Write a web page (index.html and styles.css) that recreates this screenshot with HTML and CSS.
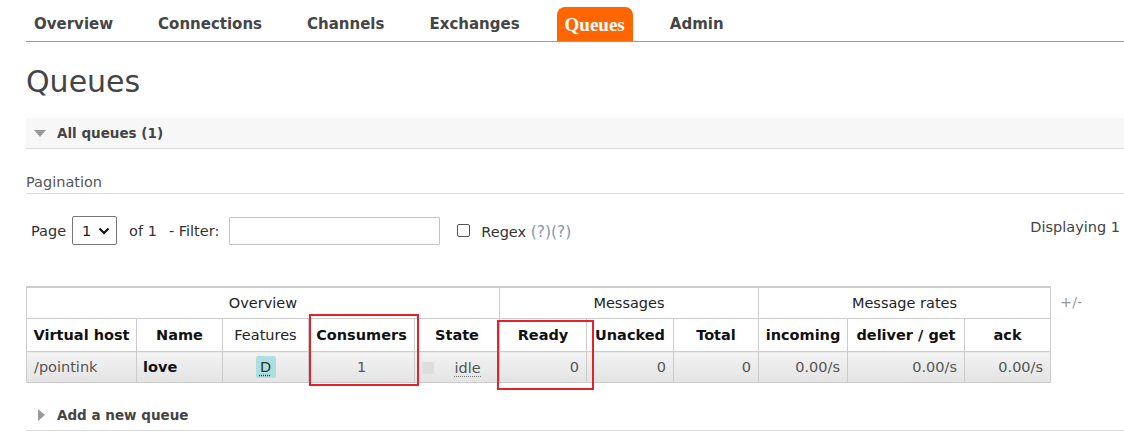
FILE: index.html
```html
<!DOCTYPE html>
<html lang="en">
<head>
<meta charset="utf-8">
<title>Queues</title>
<link rel="stylesheet" href="styles.css">
</head>
<body>
<div class="page">
  <nav class="menu">
    <ul>
      <li><a>Overview</a></li>
      <li><a>Connections</a></li>
      <li><a>Channels</a></li>
      <li><a>Exchanges</a></li>
      <li class="selected"><a>Queues</a></li>
      <li><a>Admin</a></li>
    </ul>
  </nav>

  <h1 class="title">Queues</h1>

  <section class="section">
    <h2 class="sec-head"><span class="tri-down"></span>All queues (1)</h2>
    <div class="sec-body">
      <h3 class="pag-title">Pagination</h3>
      <div class="filter-row">
        <div class="filter-left">
          <span class="lbl-page">Page</span>
          <div class="sel-wrap">
            <select class="page-select"><option>1</option></select>
            <svg class="chev" width="12" height="8" viewBox="0 0 12 8"><path d="M1.5 1.5 L6 6 L10.5 1.5" fill="none" stroke="#111" stroke-width="2"/></svg>
          </div>
          <span class="lbl-of">of 1</span>
          <span class="lbl-filter">- Filter:</span>
          <input class="filter-input" type="text">
          <span class="checkbox"></span>
          <span class="lbl-regex">Regex <span class="help">(?)(?)</span></span>
        </div>
        <div class="displaying">Displaying 1</div>
      </div>

      <div class="table-wrap">
        <table class="list">
          <colgroup>
            <col class="c-vhost"><col class="c-name"><col class="c-feat"><col class="c-cons"><col class="c-state">
            <col class="c-ready"><col class="c-unack"><col class="c-total">
            <col class="c-in"><col class="c-deliver"><col class="c-ack">
          </colgroup>
          <thead>
            <tr class="group-row">
              <th colspan="5">Overview</th>
              <th colspan="3">Messages</th>
              <th colspan="3">Message rates</th>
            </tr>
            <tr class="head-row">
              <th>Virtual host</th>
              <th>Name</th>
              <th class="plain">Features</th>
              <th>Consumers</th>
              <th>State</th>
              <th>Ready</th>
              <th>Unacked</th>
              <th>Total</th>
              <th>incoming</th>
              <th>deliver / get</th>
              <th>ack</th>
            </tr>
          </thead>
          <tbody>
            <tr class="data-row">
              <td class="left">/pointink</td>
              <td class="left name">love</td>
              <td class="center"><span class="badge">D</span></td>
              <td class="center">1</td>
              <td class="center state"><span class="state-box"></span><span class="idle">idle</span></td>
              <td class="right">0</td>
              <td class="right">0</td>
              <td class="right">0</td>
              <td class="right">0.00/s</td>
              <td class="right">0.00/s</td>
              <td class="right">0.00/s</td>
            </tr>
          </tbody>
        </table>
        <span class="plusminus">+/-</span>
        <div class="mark mark-consumers"></div>
        <div class="mark mark-ready"></div>
      </div>
    </div>
  </section>

  <section class="section collapsed">
    <h2 class="sec-head"><span class="tri-right"></span>Add a new queue</h2>
  </section>
</div>
</body>
</html>
```
FILE: styles.css
```css
html, body {
  margin: 0;
  padding: 0;
  background: #fff;
}

body {
  font-family: "DejaVu Sans", Verdana, sans-serif;
  font-size: 14.5px;
  color: #444;
}

.page {
  padding-left: 26px;
}

/* ---------- menu ---------- */
.menu ul {
  list-style: none;
  margin: 7px 0 0 0;
  padding: 0;
  display: flex;
  gap: 29px;
  border-bottom: 1px solid #ec8a2e;
}

.menu li a {
  display: block;
  height: 34px;
  line-height: 35px;
  padding: 0 8px;
  font-weight: bold;
  font-size: 15px;
  color: #454545;
}

.menu li.selected a {
  background: #ff6600;
  color: #fff;
  border-radius: 8px 8px 0 0;
  font-family: "Liberation Serif", "Times New Roman", serif;
  font-size: 19px;
  padding: 0 8px;
}

/* ---------- title ---------- */
.title {
  margin: 22px 0 0 0;
  font-size: 30px;
  line-height: 36px;
  font-weight: normal;
  color: #444;
}

/* ---------- sections ---------- */
.section .sec-head {
  margin: 18px 0 0 0;
  height: 30px;
  line-height: 31px;
  padding-left: 8px;
  background: #f7f7f7;
  border-bottom: 1px solid #ddd;
  font-size: 13.5px;
  font-weight: bold;
  color: #444;
  display: flex;
  align-items: center;
}

.section.collapsed .sec-head {
  margin-top: 17px;
  background: #fff;
  padding-left: 12px;
}

.tri-down {
  width: 0;
  height: 0;
  border-left: 6px solid transparent;
  border-right: 6px solid transparent;
  border-top: 7px solid #9a9a9a;
  margin-right: 11px;
}

.tri-right {
  width: 0;
  height: 0;
  border-top: 6px solid transparent;
  border-bottom: 6px solid transparent;
  border-left: 7px solid #9a9a9a;
  margin-right: 12px;
}

.pag-title {
  margin: 24px 0 0 0;
  font-size: 14.5px;
  line-height: 18px;
  font-weight: normal;
  color: #555;
  padding-bottom: 2px;
  border-bottom: 1px solid #ddd;
}

/* ---------- filter row ---------- */
.filter-row {
  margin-top: 22px;
  display: flex;
  justify-content: space-between;
  align-items: flex-start;
  padding-left: 5px;
  padding-right: 4px;
}

.filter-left {
  display: flex;
  align-items: center;
  height: 29px;
  color: #333;
}

.lbl-page { margin-right: 6px; }

.sel-wrap {
  position: relative;
  width: 45px;
  height: 29px;
}

.page-select {
  appearance: none;
  -webkit-appearance: none;
  width: 45px;
  height: 29px;
  box-sizing: border-box;
  border: 1px solid #767676;
  border-radius: 2px;
  background: #fff;
  padding: 0 0 0 9px;
  font-family: "DejaVu Sans", Verdana, sans-serif;
  font-size: 14.5px;
  color: #222;
}

.chev {
  position: absolute;
  left: 26px;
  top: 11px;
  pointer-events: none;
}

.lbl-of { margin-left: 12px; }
.lbl-filter { margin-left: 12px; }

.filter-input {
  margin: 0 0 0 10px;
  width: 211px;
  height: 28px;
  box-sizing: border-box;
  border: 1px solid #c4c4c4;
  border-radius: 1px;
  padding: 0;
}

.checkbox {
  margin-left: 17px;
  width: 13px;
  height: 13px;
  box-sizing: border-box;
  border: 1px solid #555;
  border-radius: 2px;
  background: #fff;
}

.lbl-regex {
  margin-left: 11px;
  margin-top: 3px;
}

.help {
  color: #8497ab;
  font-size: 15.5px;
}

.displaying {
  margin-top: 2px;
  line-height: 18px;
  color: #444;
}

/* ---------- table ---------- */
.table-wrap {
  position: relative;
  margin-top: 41px;
  display: flex;
  align-items: flex-start;
  gap: 9px;
}

.list {
  border-collapse: collapse;
  table-layout: fixed;
  width: 1024px;
  border-top: 2px solid #ccc;
  font-size: 14.5px;
}

.c-vhost { width: 110px; }
.c-name { width: 86px; }
.c-feat { width: 86px; }
.c-cons { width: 106px; }
.c-state { width: 85px; }
.c-ready { width: 87px; }
.c-unack { width: 87px; }
.c-total { width: 85px; }
.c-in { width: 89px; }
.c-deliver { width: 117px; }
.c-ack { width: 86px; }

.list th, .list td {
  border: 1px solid #ccc;
  padding: 0 7px;
  white-space: nowrap;
  overflow: hidden;
}

.group-row th {
  height: 30px;
  font-weight: normal;
  color: #222;
  text-align: center;
  background: #fff;
}

.head-row th {
  height: 32px;
  font-weight: bold;
  color: #111;
  text-align: center;
  background: #fff;
  padding: 0 2px;
}

.head-row th.plain {
  font-weight: normal;
  color: #222;
}

.data-row td {
  height: 30px;
  color: #555;
  background: linear-gradient(#f3f3f3, #e4e4e4);
}

.data-row td.left { text-align: left; }
.data-row td.center { text-align: center; }
.data-row td.right { text-align: right; }
.data-row td.name { font-weight: bold; color: #111; padding-left: 6px; }

.badge {
  display: inline-block;
  width: 20px;
  height: 22px;
  line-height: 22px;
  border-radius: 2px;
  background: #aedfe0;
  color: #333;
  text-decoration: underline dotted #333;
  text-underline-offset: 3px;
  vertical-align: middle;
}

.state {
  padding-right: 18px !important;
}

.state-box {
  display: inline-block;
  width: 12px;
  height: 12px;
  background: #dedede;
  margin-right: 20px;
  vertical-align: middle;
}

.idle {
  border-bottom: 1px dotted #777;
  line-height: 16px;
  vertical-align: middle;
}

.plusminus {
  color: #999;
  margin-top: 7px;
  line-height: 18px;
}

/* annotation frames over the table */
.mark {
  position: absolute;
  border: 2px solid #e3232b;
  box-sizing: border-box;
}

.mark-consumers {
  left: 283px;
  top: 28px;
  width: 110px;
  height: 72px;
}

.mark-ready {
  left: 471px;
  top: 34px;
  width: 97px;
  height: 70px;
}
```
